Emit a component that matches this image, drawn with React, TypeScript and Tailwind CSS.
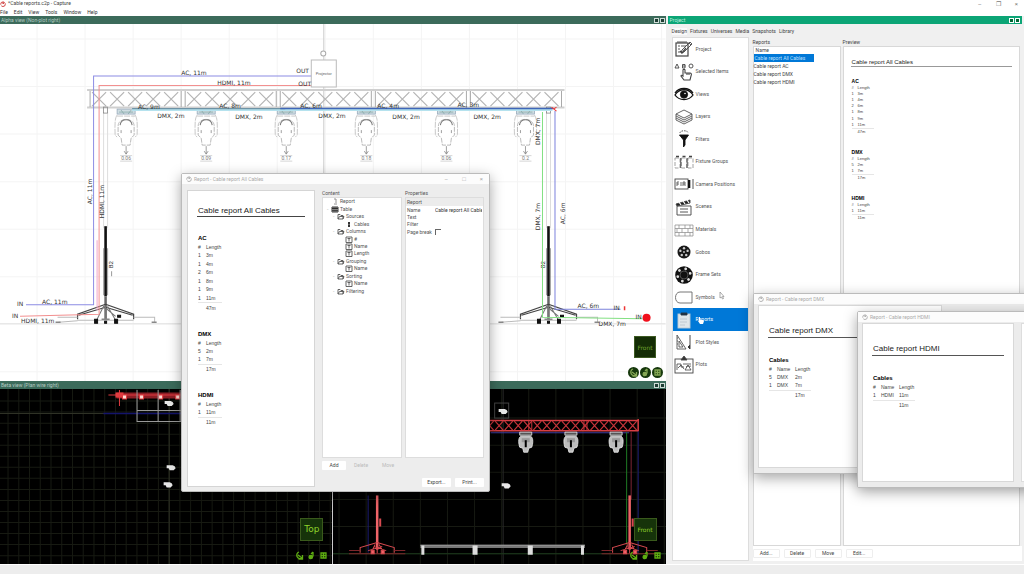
import React from 'react';
import { clsx } from 'clsx';

type Row = string[];

interface Section {
  title: string;
  head: Row;
  rows: Row[];
  total: string;
}

const AC: Section = {
  title: 'AC',
  head: ['#', 'Length'],
  rows: [['1', '3m'], ['1', '4m'], ['2', '6m'], ['1', '8m'], ['1', '9m'], ['1', '11m']],
  total: '47m',
};
const DMX: Section = { title: 'DMX', head: ['#', 'Length'], rows: [['5', '2m'], ['1', '7m']], total: '17m' };
const HDMI: Section = { title: 'HDMI', head: ['#', 'Length'], rows: [['1', '11m']], total: '11m' };

const DMX_ONLY: Section = {
  title: 'Cables',
  head: ['#', 'Name', 'Length'],
  rows: [['5', 'DMX', '2m'], ['1', 'DMX', '7m']],
  total: '17m',
};
const HDMI_ONLY: Section = { title: 'Cables', head: ['#', 'Name', 'Length'], rows: [['1', 'HDMI', '11m']], total: '11m' };

const MENU = ['File', 'Edit', 'View', 'Tools', 'Window', 'Help'];
const TABS = ['Design', 'Fixtures', 'Universes', 'Media', 'Snapshots', 'Library'];
const REPORTS = ['Cable report All Cables', 'Cable report AC', 'Cable report DMX', 'Cable report HDMI'];

/* ---------- report table ---------- */

const ReportSection: React.FC<{ section: Section; small?: boolean }> = ({ section, small }) => (
  <section>
    <h3 className={clsx('font-bold text-black', small ? 'text-[5px] leading-[7px]' : 'text-[6px] leading-[10px]')}>{section.title}</h3>
    <table
      className={clsx(
        'border-collapse text-left text-[#444]',
        small ? 'text-[4px] leading-[6px]' : 'text-[5px] leading-[8px]',
        section.rows.length > 4 && (small ? 'h-[50px]' : 'h-[69px]'),
        section.rows.length === 2 && (small ? 'h-[25px]' : 'h-[34px]'),
        section.rows.length === 1 && (small ? 'h-[19px]' : 'h-[26px]'),
      )}
    >
      <thead>
        <tr>
          {section.head.map((h, i) => (
            <th key={h} className={clsx('p-0 font-normal', i === 0 ? (small ? 'w-[6px]' : 'w-[8px]') : h === 'Name' ? 'w-[18px]' : 'w-[16px]')}>{h}</th>
          ))}
        </tr>
      </thead>
      <tbody>
        {section.rows.map((row, r) => (
          <tr key={r}>
            {row.map((cell, c) => <td key={c} className="p-0">{cell}</td>)}
          </tr>
        ))}
        <tr className="border-t border-[#e6e6e6]">
          <td className="p-0" colSpan={section.head.length - 1} />
          <td className="p-0">{section.total}</td>
        </tr>
      </tbody>
    </table>
  </section>
);

const AllCables: React.FC<{ small?: boolean }> = ({ small }) => (
  <div className={clsx("font-['Liberation_Sans']", small ? 'px-[7px] pt-[11px]' : 'px-[9px] pt-[14px]')}>
    <h2 className={clsx('border-b px-[1px] text-[#222]', small ? 'border-[#999] text-[6px] leading-[8px]' : 'border-[#444] text-[8px] leading-[11px]')}>
      Cable report All Cables
    </h2>
    <div className={clsx('flex flex-col px-[1px]', small ? 'gap-[14px] pt-[11px]' : 'gap-[17px] pt-[16px]')}>
      {[AC, DMX, HDMI].map((s) => <ReportSection key={s.title} section={s} small={small} />)}
    </div>
  </div>
);

/* ---------- icons ---------- */

const Svg: React.FC<{ children: React.ReactNode; className?: string }> = ({ children, className = 'h-[18px] w-[20px]' }) => (
  <svg viewBox="0 0 20 18" className={className} fill="none" stroke="#444" strokeWidth="0.9" aria-hidden="true">{children}</svg>
);

const spokes = [0, 60, 120, 180, 240, 300];

const ICONS: Record<string, React.ReactNode> = {
  Project: (
    <Svg>
      <rect x="2" y="3" width="12" height="13" strokeWidth="1.2" />
      <path d="M3 2h10M4 6h2M4 9h2M4 12h2M7 6h5M7 13l1-3 8-8 2 2-8 8zM15 3l2 2" />
      <path d="M6 11l2 2 4-5" strokeWidth="1.3" />
    </Svg>
  ),
  'Selected Items': (
    <Svg>
      <path d="M1 5l2-4 2 4zM11 1.500H8.500v3.500H11zM8.500 3h3" />
      <circle cx="17" cy="3" r="2" />
      <path d="M9 12V7c0-1 2-1 2 0v3h5c1 0 2 1 1 3l-1 4h-6l-3-4c0-1 1-1 2 0zM13 10v2M15 10v2" strokeWidth="1.1" />
    </Svg>
  ),
  Views: (
    <Svg>
      <path d="M1 10c4-7 14-7 18 0-4 6-14 6-18 0z" strokeWidth="1.3" stroke="#111" />
      <path d="M1 8c4-6 14-6 18 0" strokeWidth="1.3" stroke="#111" />
      <circle cx="10" cy="9.500" r="3.600" fill="#111" stroke="#111" />
      <circle cx="11" cy="8.500" r="0.800" fill="#fff" stroke="none" />
    </Svg>
  ),
  Layers: (
    <Svg>
      <path d="M10 2l8 4-8 4-8-4zM2 6v6l8 4 8-4V6M2 8l8 4 8-4M2 10l8 4 8-4" stroke="#555" />
    </Svg>
  ),
  Filters: (
    <Svg>
      <path d="M6 3c0-3 8-3 8 0" strokeDasharray="1.500 1" />
      <path d="M5.500 5h9l-3.500 5v5l-1.500 2v-7z" fill="#111" stroke="#111" />
    </Svg>
  ),
  'Fixture Groups': (
    <Svg>
      <path d="M1 5h5v10H1zM7.500 5h5v10h-5zM14 5h5v10h-5z" stroke="#999" strokeDasharray="4 1.500" />
      <path d="M2 3.500h3M8.500 3.500h3M15 3.500h3" strokeWidth="1.500" />
      <path d="M6.700 5v10M13.200 5v10" stroke="#444" />
    </Svg>
  ),
  'Camera Positions': (
    <Svg>
      <rect x="1" y="4" width="13" height="10" />
      <path d="M3 11V7h2M3 9h2M7 11V7M9 11V7h2v4M9 9h2M14 7l2-2v8l-2-2" strokeWidth="0.800" />
      <path d="M15 5v8" strokeWidth="2" stroke="#111" />
      <path d="M19 4v10" />
    </Svg>
  ),
  Scenes: (
    <Svg>
      <path d="M3 8h14v9H3zM6 11h8M6 14h8" />
      <path d="M2 6l14-4v3L3 8z" fill="#222" />
      <path d="M5 4l2 3M9 3l2 3M13 2l2 3" stroke="#fff" strokeWidth="1.200" />
    </Svg>
  ),
  Materials: (
    <Svg>
      <path d="M1 4h18v11H1zM1 7.500h18M1 11.500h18M5 4v3.500M11 4v3.500M16 4v3.500M3 7.500v4M8 7.500v4M14 7.500v4M5 11.500V15M11 11.500V15M16 11.500V15" stroke="#888" strokeWidth="0.700" />
    </Svg>
  ),
  Gobos: (
    <Svg>
      <circle cx="10" cy="9" r="6.500" fill="#181818" stroke="none" />
      {[0, 72, 144, 216, 288].map((a) => <circle key={a} cx="10" cy="5.200" r="1.200" fill="#ccc" stroke="none" transform={`rotate(${a} 10 9)`} />)}
      <circle cx="10" cy="9" r="0.900" fill="#ccc" stroke="none" />
    </Svg>
  ),
  'Frame Sets': (
    <Svg>
      <circle cx="10" cy="9" r="8.800" fill="#111" stroke="none" />
      {spokes.map((a) => <circle key={a} cx="10" cy="2.600" r="1.400" fill="#ddd" stroke="none" transform={`rotate(${a + 15} 10 9)`} />)}
      <circle cx="10" cy="9" r="4" stroke="#777" strokeWidth="0.600" />
    </Svg>
  ),
  Symbols: (
    <Svg>
      <path d="M6 4h12v11H6c-6 0-6-11 0-11z" stroke="#666" />
    </Svg>
  ),
  Reports: (
    <Svg>
      <rect x="4" y="3" width="12" height="14" fill="#dfe6ea" stroke="#bccbd5" />
      <path d="M7 2h6v2H7z" fill="#234" stroke="#234" />
      <path d="M6 8h7M6 11h7M6 14h5" stroke="#bcc6cf" />
    </Svg>
  ),
  'Plot Styles': (
    <Svg>
      <path d="M3 2v14h9zM5 8v6h4zM3 5h1M3 8h1M3 11h1" stroke="#555" />
      <path d="M16 2v10M14 14l2-2v4z" stroke="#333" fill="#333" />
    </Svg>
  ),
  Plots: (
    <Svg>
      <rect x="1" y="3" width="18" height="14" />
      <path d="M3 14V8h4v3h3M4 12l3-3 3 4M11 14l3-5 3 5zM9 8h8M12 11c2-2 3 0 5-1" strokeWidth="0.800" />
      <path d="M10 0l3 4H7z" fill="#333" />
    </Svg>
  ),
};

const AppMark: React.FC<{ className?: string }> = ({ className }) => (
  <svg viewBox="0 0 6 6" className={clsx('h-[6px] w-[6px]', className)} fill="none" stroke="currentColor" strokeWidth="0.900" aria-hidden="true">
    <circle cx="3" cy="3.200" r="2.300" strokeDasharray="5 1" />
    <path d="M3 1v2l1.500-2" />
  </svg>
);

const ViewTool: React.FC<{ kind: 'orbit' | 'pan' | 'grid'; dark?: boolean }> = ({ kind, dark }) => {
  const ink = dark ? '#5fae12' : '#86a855';
  return (
    <button aria-label={kind} className={clsx('h-[11px] w-[11px] rounded-full', !dark && 'bg-[#16380c]')}>
      <svg viewBox="0 0 11 11" fill="none" stroke={ink} strokeWidth="1.300">
        {kind === 'orbit' && <path d="M5 2a3 3 0 1 0 2.500 6.500M4 5l4 3M8.500 5v4H4.500" />}
        {kind === 'pan' && <path d="M7 2v4.500M7 2l-2 2" />}
        {kind === 'pan' && <circle cx="4.800" cy="7" r="1.700" fill={ink} />}
        {kind === 'grid' && <path d="M3 3h5v5H3zM3 5.500h5M5.500 3v5" />}
      </svg>
    </button>
  );
};

/* ---------- viewports ---------- */

const ViewControls: React.FC<{ label: string; dark?: boolean }> = ({ label, dark }) => (
  <div className="absolute right-[3px] bottom-[3px] flex w-[35px] flex-col items-center gap-[9px]">
    <button
      className={clsx(
        "flex items-center justify-center border font-['DejaVu_Sans']",
        dark ? 'h-[23px] w-[23px] border-[#3a5a1c] bg-[#16330a] text-[#8fd22a]' : 'h-[22px] w-[22px] border-[#3d5a22] bg-[#142c05] text-[#6fa22e]',
        label === 'Top' ? 'text-[9px]' : 'text-[6px]',
      )}
    >
      {label}
    </button>
    <div className="flex gap-[1px]">
      <ViewTool kind="orbit" dark={dark} />
      <ViewTool kind="pan" dark={dark} />
      <ViewTool kind="grid" dark={dark} />
    </div>
  </div>
);

const ViewHeader: React.FC<{ title: string }> = ({ title }) => (
  <header className="flex h-[8px] shrink-0 items-center justify-between bg-[#3c6b5b] px-[1px] text-[5px] leading-[8px] text-[#b5ccc3]">
    <span>{title}</span>
    <span className="flex gap-[1px]">
      <button aria-label="Maximize view" className="h-[5px] w-[5px] border border-[#cfdcd7] bg-[#1d3d33]" />
      <button aria-label="Close view" className="h-[5px] w-[5px] border border-[#cfdcd7] bg-[#1d3d33]" />
    </span>
  </header>
);

const range = (n: number) => Array.from({ length: n }, (_, i) => i);

const Fixture: React.FC<{ x: number; id: string }> = ({ x, id }) => (
  <g transform={`translate(${x} 109)`} fill="none" stroke="#aaa" strokeWidth="0.800">
    <rect x="-9" y="0" width="18" height="5" fill="#cfdde2" stroke="#9ab" />
    <path d="M-7 3H7M-5 1l3 4M5 1l-3 4" stroke="#8aa" />
    <path d="M-9 6c-3 4-2 14-2 20l2 2M9 6c3 4 2 14 2 20l-2 2M-9 7H9" stroke="#bbb" strokeDasharray="6 1" />
    <path d="M-8 17c0-9 16-9 16 0v9l-3 3-1 7h-8l-1-7-3-3z" fill="#fff" strokeDasharray="5 1" />
    <path d="M-6 16c1-7 11-7 12 0" stroke="#777" strokeWidth="1" />
    <path d="M-5 21v3M5 21v3M0 37v8M-2 42l2 3 2-3" stroke="#888" />
    <text x="0" y="51" textAnchor="middle" fontSize="5" fill="#777" stroke="none">{id}</text>
    <path d="M-6 46.500H6M-6 52H6" stroke="#ccc" />
  </g>
);

const Tower: React.FC<{ x: number; side: 1 | -1 }> = ({ x, side }) => (
  <g transform={`translate(${x} 0)`} fill="none">
    <path d="M-2 112V228M2 112V228" stroke="#ddd" />
    <rect x="-2" y="107" width="4" height="6" stroke="#888" strokeWidth="0.800" />
    <path d="M0 226V296" stroke="#111" strokeWidth="2.600" />
    <path d="M0 296V320" stroke="#666" strokeWidth="2.500" />
    <path d="M-2 248V295M2 248V295" stroke="#666" strokeWidth="0.600" />
    <path d="M0 304L-28 314V319M0 304L28 314V319M0 307L-27 315M0 307L27 315" stroke="#444" strokeWidth="1.200" />
    <path d="M-2 306L-9 320M2 306L10 320M0 306V320M-2 306L10 316" stroke="#777" />
    <path d="M-47 322L-28 320.500M-28 320H28M28 317H49V322M-28 317H-48" stroke="#bbb" />
    <path d="M-50 322h5M46 322h5M-4 319H4" stroke="#888" strokeWidth="1.500" />
    <path d="M-11 319h3v4h-3zM9 319h3v4H9zM12 315h3v2h-3zM-1 321h2v2h-2z" fill="#111" stroke="#111" />
    <text transform={`translate(${side > 0 ? 7 : -3} 268) rotate(-90)`} fontSize="6" fill="#333">B2</text>
    <path d={`M${side * 6} 271v5`} stroke="#999" />
  </g>
);

const label = "font-['DejaVu_Sans'] text-[6px] fill-[#333]";

const PlotView = () => (
  <svg viewBox="0 24 665 357" className="block h-full w-full bg-white" role="img" aria-label="Front plot of the rig">
    <g stroke="#f4f4f4" strokeWidth="1">
      {range(14).map((i) => <path key={i} d={`M${37 + i * 48} 24V381`} />)}
      {range(8).map((i) => <path key={i} d={`M0 ${39 + i * 47.500}H665`} />)}
    </g>
    <path d="M0 323.500H665" stroke="#e2e2e2" />
    <path d="M323.500 24V173" stroke="#ccc" />

    {/* truss */}
    <g fill="none" stroke="#cfcfcf">
      <path d="M87 90H564M87 107.500H564" strokeWidth="2" />
      {range(5).map((i) => (
        <g key={i} transform={`translate(${88 + i * 95} 91)`}>
          <path d="M2 0V16M93 0V16" stroke="#aaa" />
          {range(5).map((k) => <path key={k} d={`M${4 + k * 18} 1L${18 + k * 18} 15M${18 + k * 18} 1L${4 + k * 18} 15`} stroke="#b5b5b5" strokeWidth="1.200" />)}
        </g>
      ))}
    </g>

    {[126, 206, 286, 366, 446, 525].map((x, i) => <Fixture key={x} x={x} id={['0.06', '0.09', '0.17', '0.18', '0.06', '0.2'][i]} />)}
    <Tower x={105.500} side={1} />
    <Tower x={548} side={-1} />

    {/* cables */}
    <g fill="none">
      <path d="M132 110H552" stroke="#b5e2ee" strokeWidth="2" />
      <path d="M132 108.500H285" stroke="#6f93a5" strokeWidth="1.200" />
      <path d="M280 108.500H553" stroke="#3f66b8" strokeWidth="1.500" />
      <path d="M312 76H93.500V304.500H26" stroke="#8c8ce4" />
      <path d="M312 85.500H99V314L20 316" stroke="#f29090" />
      <path d="M97 310V240" stroke="#f3a5c8" />
      <path d="M554.500 111V309H620" stroke="#7c82dc" />
      <path d="M542 112V317L642 318.500" stroke="#83e083" />
      <path d="M551 107l5 4M556 107l-3 2" stroke="#e33" />
    </g>

    <path d="M311 60h25v27h-25z" fill="#fff" stroke="#bbb" />
    <circle cx="323" cy="53.500" r="2.500" fill="#fff" stroke="#aaa" />
    <text x="323.500" y="75" textAnchor="middle" fontSize="4" fill="#666">Projector</text>

    <g className={label}>
      <text x="181" y="75">AC, 11m</text>
      <text x="217" y="85">HDMI, 11m</text>
      <text x="296" y="73">OUT</text>
      <text x="298" y="86">OUT</text>
      <text x="138" y="109">AC, 9m</text>
      <text x="219" y="108">AC, 8m</text>
      <text x="300" y="108">AC, 6m</text>
      <text x="377" y="108">AC, 4m</text>
      <text x="457" y="107">AC, 3m</text>
      <text x="157" y="118">DMX, 2m</text>
      <text x="235" y="119">DMX, 2m</text>
      <text x="318" y="118">DMX, 2m</text>
      <text x="392" y="119">DMX, 2m</text>
      <text x="473" y="119">DMX, 2m</text>
      <text x="17" y="306">IN</text>
      <text x="42" y="304">AC, 11m</text>
      <text x="12" y="318">IN</text>
      <text x="21" y="323">HDMI, 11m</text>
      <text x="577" y="308">AC, 6m</text>
      <text x="613" y="310">IN</text>
      <text x="598" y="326">DMX, 7m</text>
      <text x="635" y="319">IN</text>
      <text transform="translate(92 204) rotate(-90)">AC, 11m</text>
      <text transform="translate(104 218) rotate(-90)">HDMI, 11m</text>
      <text transform="translate(540 145) rotate(-90)">DMX, 7m</text>
      <text transform="translate(540 230) rotate(-90)">DMX, 7m</text>
      <text transform="translate(564 224) rotate(-90)">AC, 6m</text>
    </g>
    <circle cx="646" cy="317.500" r="4" fill="#f0101c" />
    <path d="M624 306v4" stroke="#e33" strokeWidth="1.500" />
  </svg>
);

const DarkGrid: React.FC<{ x: number; step: number; count: number; y: number; ystep: number; rows: number }> = ({ x, step, count, y, ystep, rows }) => (
  <g stroke="#171a12">
    {range(count).map((i) => <path key={i} d={`M${x + i * step} 390V565`} />)}
    {range(rows).map((i) => <path key={i} d={`M0 ${y + i * ystep}H665`} />)}
  </g>
);

const Lamp: React.FC<{ x: number; y: number }> = ({ x, y }) => (
  <path d={`M${x - 4} ${y - 2}l6 0 2 1 1 2-2 2h-4l-1-2-2 0z`} fill="#e8e8e8" />
);

const TopView = () => (
  <svg viewBox="0 390 331 174" preserveAspectRatio="xMinYMid slice" className="block h-full w-full bg-black" role="img" aria-label="Top view of the rig">
    <DarkGrid x={8} step={10.700} count={31} y={402} ystep={11} rows={15} />
    <path d="M168.500 390V565M0 414.500H331" stroke="#2f3226" />
    <path d="M103 414.500H182" stroke="#14146c" strokeWidth="1.500" />
    <path d="M116 396.500H182" stroke="#8d1f26" strokeWidth="6" />
    <path d="M108 396H182M119 391V407" stroke="#e03b40" />
    <path d="M115 396h8" stroke="#e03b40" strokeWidth="5" />
    <path d="M122 396h4v4h-4zM139 396h4v4h-4zM158 396h4v4h-4zM175 396h4v4h-4z" fill="#ffdcd5" stroke="#e03b40" />
    <path d="M136.500 391V422.500H182M157.500 391V422.500M179.500 391V422.500M136.500 411.500H182" fill="none" stroke="#999" />
    <Lamp x={168} y={404} />
    <Lamp x={170} y={468} />
    <Lamp x={167} y={485} />
  </svg>
);

const RedTower: React.FC<{ x: number }> = ({ x }) => (
  <g transform={`translate(${x} 0)`} fill="none" stroke="#d84a50">
    <path d="M0 496V550" strokeWidth="2.500" stroke="#ef6468" />
    <path d="M3 519v8" strokeWidth="2" />
    <path d="M0 543L-17 548V553M0 543L17 548V553M-2 545L-6 553M2 545L6 553M0 545V554M-9 551l14-4M9 551l-12-4" />
    <path d="M-28 551H-17M17 551H28M-28 554H28" stroke="#7e262b" />
    <path d="M-6 551h3v3h-3zM4 551h3v3H4z" fill="#ef6468" />
  </g>
);

const FrontView = () => (
  <svg viewBox="332 390 333 174" preserveAspectRatio="xMidYMid slice" className="block h-full w-full bg-black" role="img" aria-label="Front view of the rig">
    <DarkGrid x={339} step={27} count={13} y={419} ystep={27} rows={6} />
    <path d="M502.500 390V564" stroke="#2a2a2a" />
    <path d="M332 554H665" stroke="#1b3a1b" />
    <path d="M368 496V553M637 432V553" stroke="#1d1d72" />
    <path d="M490 433.500H628" stroke="#3c3c9c" />
    <path d="M625.500 433V545" stroke="#1f7a25" />
    <path d="M630 433V500" stroke="#7c2634" />
    <g stroke="#c5343a" fill="none">
      <path d="M480 421.500H637M480 431.500H637M637 420V432" strokeWidth="1.500" stroke="#d83f45" />
      {range(16).map((i) => <path key={i} d={`M${485 + i * 9.500} 422l8 9M${493 + i * 9.500} 422l-8 9`} strokeWidth="1.200" />)}
      <path d="M528 422v9M531 422v9M583 422v9M586 422v9" />
    </g>
    {[525, 570, 615].map((x) => (
      <g key={x} transform={`translate(${x} 433)`} fill="#bdbdbd" stroke="#eee" strokeWidth="0.800">
        <path d="M-6 0H6V3H-6z" fill="#555" />
        <path d="M-5 4C-8 6-7 12-6 15l3 1 1 4h4l1-4 3-1c1-3 2-9-1-11z" />
        <path d="M-4 6h8v4h-8z" fill="#999" stroke="none" />
        <path d="M-1 8h2v7h-2z" fill="#000" stroke="none" />
      </g>
    ))}
    <RedTower x={377} />
    <RedTower x={628.500} />
    <rect x="494" y="404" width="14" height="15" fill="none" stroke="#444" />
    <Lamp x={502} y={412} />
    <Lamp x={505} y={486} />
    <path d="M420 547H584" stroke="#777" strokeWidth="3" />
    <path d="M420 545.500H584" stroke="#aaa" strokeWidth="0.800" />
    <path d="M421 546h3v9h-3zM472 546h5v9h-5zM527 546h5v9h-5zM580 546h3v9h-3z" fill="#ddd" />
  </svg>
);

/* ---------- floating windows ---------- */

const WindowFrame: React.FC<{ title: string; controls?: boolean; className: string; children: React.ReactNode }> = ({ title, controls, className, children }) => (
  <div role="dialog" aria-label={title} className={clsx('absolute flex flex-col rounded-[2px] border border-[#bbb] bg-[#ededed] shadow-[0_4px_14px_rgba(0,0,0,0.35)]', className)}>
    <header className="flex h-[10px] shrink-0 items-center gap-[2px] bg-[#fcfcfc] px-[4px] text-[5px] leading-[10px] text-[#aaa]">
      <AppMark />
      <span className="flex-1">{title}</span>
      {controls && (
        <span className="flex gap-[14px] pr-[2px] text-[6px]">
          <button aria-label="Minimize">–</button>
          <button aria-label="Maximize">□</button>
          <button aria-label="Close">×</button>
        </span>
      )}
    </header>
    {children}
  </div>
);

const TREE: { name: string; depth: number; icon: 'page' | 'table' | 'folder' | 'plug' | 'field' }[] = [
  { name: 'Report', depth: 0, icon: 'page' },
  { name: 'Table', depth: 0, icon: 'table' },
  { name: 'Sources', depth: 1, icon: 'folder' },
  { name: 'Cables', depth: 2, icon: 'plug' },
  { name: 'Columns', depth: 1, icon: 'folder' },
  { name: '#', depth: 2, icon: 'field' },
  { name: 'Name', depth: 2, icon: 'field' },
  { name: 'Length', depth: 2, icon: 'field' },
  { name: 'Grouping', depth: 1, icon: 'folder' },
  { name: 'Name', depth: 2, icon: 'field' },
  { name: 'Sorting', depth: 1, icon: 'folder' },
  { name: 'Name', depth: 2, icon: 'field' },
  { name: 'Filtering', depth: 1, icon: 'folder' },
];

const TreeIcon: React.FC<{ kind: string }> = ({ kind }) => (
  <svg viewBox="0 0 8 7" className="h-[7px] w-[8px] shrink-0" fill="none" stroke="#555" strokeWidth="0.900" aria-hidden="true">
    {kind === 'page' && <path d="M3 1h2v4M3 6h3" stroke="#888" />}
    {kind === 'table' && <path d="M1 1h6v5H1zM1 2.500h6M1 4.300h6M3 1v5M5 1v5" stroke="#222" />}
    {kind === 'folder' && <path d="M1 6V1.500h2l1 1h2V6zM1 6l1.500-2.500H7L6 6" />}
    {kind === 'plug' && <path d="M4 1v5M3 2h2M3 5h2" stroke="#222" strokeWidth="1.300" />}
    {kind === 'field' && <path d="M1 1h6v5.500H1zM2.500 2.500h3M4 2.500v3" />}
  </svg>
);

const pushButton = 'h-[9px] rounded-[1px] bg-white px-[4px] text-[5px] leading-[9px] text-[#444]';

const AllCablesWindow = () => (
  <WindowFrame title="Report - Cable report All Cables" controls className="top-[173px] left-[181px] h-[319px] w-[309px]">
    <div className="flex min-h-0 flex-1 gap-[7px] px-[5px] pt-[6px] pb-[4px]">
      <div className="w-[128px] shrink-0 border border-[#d5d5d5] bg-white">
        <AllCables />
      </div>
      <div className="flex min-w-0 flex-1 flex-col text-[5px] leading-[7px] text-[#555]">
        <div className="flex min-h-0 flex-1 gap-[3px]">
          <div className="flex w-[80px] shrink-0 flex-col">
            <h3>Content</h3>
            <div className="flex-1 border border-[#ddd] bg-white">
              <ul className="grid h-[97px] grid-rows-[repeat(13,1fr)]">
                {TREE.map((n, i) => (
                  <li
                    key={i}
                    className={clsx('flex items-center gap-[1px]', n.depth === 0 && 'pl-[4px]', n.depth === 1 && 'pl-[10px]', n.depth === 2 && 'pl-[18px]')}
                  >
                    <span className="w-[3px] text-[#aaa]">{n.icon === 'table' || n.icon === 'folder' ? '-' : ''}</span>
                    <TreeIcon kind={n.icon} />
                    {n.name}
                  </li>
                ))}
              </ul>
            </div>
          </div>
          <div className="flex min-w-0 flex-1 flex-col">
            <h3>Properties</h3>
            <div className="flex-1 border border-[#ddd] bg-white">
              <h4 className="bg-[#ececec] px-[1px] leading-[8px]">Report</h4>
              <label className="flex h-[8px] items-center px-[1px]">
                <span className="w-[28px] shrink-0">Name</span>
                <input className="min-w-0 flex-1 bg-transparent text-[#333]" defaultValue="Cable report All Cables" />
              </label>
              <label className="flex h-[7px] items-center px-[1px]">
                <span className="w-[28px] shrink-0">Text</span>
                <input className="min-w-0 flex-1 bg-transparent" />
              </label>
              <label className="flex h-[7px] items-center px-[1px]">
                <span className="w-[28px] shrink-0">Filter</span>
                <input className="min-w-0 flex-1 bg-transparent" />
              </label>
              <label className="flex h-[8px] items-center px-[1px]">
                <span className="w-[28px] shrink-0">Page break</span>
                <input type="checkbox" className="h-[6px] w-[6px] appearance-none border-t border-l border-[#666]" />
              </label>
            </div>
          </div>
        </div>
        <div className="flex gap-[3px] pt-[3px]">
          <button className={clsx(pushButton, 'w-[24px]')}>Add</button>
          <button disabled className="h-[9px] w-[24px] text-[#bbb]">Delete</button>
          <button disabled className="h-[9px] w-[24px] text-[#bbb]">Move</button>
        </div>
        <div className="flex justify-end gap-[4px] pt-[8px]">
          <button className={clsx(pushButton, 'w-[29px]')}>Export...</button>
          <button className={clsx(pushButton, 'w-[29px]')}>Print...</button>
        </div>
      </div>
    </div>
  </WindowFrame>
);

const SingleReport: React.FC<{ title: string; section: Section; className: string }> = ({ title, section, className }) => (
  <div className={clsx("shrink-0 border border-[#d8d8d8] bg-white px-[9px] pt-[19px] font-['Liberation_Sans']", className)}>
    <h2 className="border-b border-[#555] px-[1px] text-[8px] leading-[12px] text-[#222]">{title}</h2>
    <div className="px-[1px] pt-[17px]">
      <ReportSection section={section} />
    </div>
  </div>
);

/* ---------- project panel ---------- */

const ProjectPanel = () => (
  <aside className="flex min-w-0 flex-1 flex-col border-l-2 border-[#f0f0f0] bg-[#f0f0f0] pr-[2px]">
    <header className="flex h-[8px] shrink-0 items-center justify-between bg-[#0ca576] px-[2px] text-[5px] leading-[8px] text-[#bff0df]">
      <span>Project</span>
      <span className="flex gap-[1px]">
        <button aria-label="Pin panel" className="h-[5px] w-[5px] border border-white bg-[#063]" />
        <button aria-label="Close panel" className="h-[5px] w-[5px] border border-white bg-[#063]" />
      </span>
    </header>
    <nav className="flex h-[13px] shrink-0 items-end gap-[3px] px-[4px] pb-[2px] text-[5px] leading-[7px] text-[#444]">
      {TABS.map((t) => <button key={t} className={clsx(t === 'Design' && 'bg-[#fafafa]')}>{t}</button>)}
    </nav>
    <div className="mb-[3px] flex min-h-0 flex-1 gap-[4px] pl-[4px]">
      <div className="w-[77px] shrink-0 border border-[#ddd] bg-white">
        <ul className="grid h-[338px] grid-rows-[repeat(15,1fr)] text-[5px] leading-[7px] text-[#555]">
          {Object.entries(ICONS).map(([name, icon]) => (
            <li key={name} className={clsx('relative', name === 'Reports' && 'bg-[#0078d7] text-white')}>
              <button className="flex h-full w-full items-center gap-[2px] pl-[1px] text-left">
                {icon}
                {name}
              </button>
              {name === 'Symbols' && (
                <svg viewBox="0 0 6 9" className="absolute top-[5px] left-[46px] h-[9px] w-[6px]" fill="#fff" stroke="#888" strokeWidth="0.700" aria-hidden="true">
                  <path d="M1 1v6l1.500-1 1 2 1-.5-1-2H5z" />
                </svg>
              )}
              {name === 'Reports' && (
                <svg viewBox="0 0 6 8" className="absolute top-[9px] left-[25px] h-[8px] w-[6px]" fill="#fff" aria-hidden="true">
                  <path d="M1 0h1v3h3l1 1-1 3H2L0 4h1z" />
                </svg>
              )}
            </li>
          ))}
        </ul>
      </div>
      <div className="flex min-w-0 flex-1 flex-col bg-white">
        <div className="flex min-h-0 flex-1 gap-[2px] bg-[#f0f0f0] pt-[2px] pr-[2px] text-[5px] leading-[7px] text-[#444]">
          <section className="flex w-[88px] shrink-0 flex-col">
            <h3>Reports</h3>
            <div className="flex-1 border border-[#d8d8d8] bg-white">
              <h4 className="px-[2px] leading-[7px]">Name</h4>
              <ul>
                {REPORTS.map((r, i) => (
                  <li key={r} className="h-[8px]">
                    <button className={clsx('block h-[8px] text-left leading-[8px]', i === 0 && 'w-[60px] bg-[#0078d7] pl-[1px] text-[#bfe0ff]')}>{r}</button>
                  </li>
                ))}
              </ul>
            </div>
          </section>
          <section className="flex min-w-0 flex-1 flex-col">
            <h3>Preview</h3>
            <div className="flex-1 border border-[#d8d8d8] bg-white">
              <AllCables small />
            </div>
          </section>
        </div>
        <div className="flex h-[15px] shrink-0 items-center gap-[4px] text-[5px] text-[#444]">
          {['Add...', 'Delete', 'Move', 'Edit...'].map((b) => (
            <button key={b} className="h-[9px] w-[27px] rounded-[1px] border border-[#eee] bg-white leading-[7px]">{b}</button>
          ))}
        </div>
      </div>
    </div>
  </aside>
);

export default function App() {
  return (
    <div className="relative flex h-screen flex-col overflow-hidden bg-[#efefef] font-[Roboto,'Open_Sans',sans-serif]">
      <div className="flex h-[7px] shrink-0 items-center gap-[2px] bg-white text-[5px] leading-[7px] text-[#444]">
        <AppMark className="text-[#c33]" />
        <h1 className="flex-1">*Cable reports.c2p - Capture</h1>
        <span className="flex gap-[14px] pr-[6px] text-[6px] text-[#777]">
          <button aria-label="Minimize">–</button>
          <button aria-label="Restore">❐</button>
          <button aria-label="Close">×</button>
        </span>
      </div>
      <nav className="flex h-[9px] shrink-0 items-center gap-[6px] bg-white text-[5px] leading-[8px] text-[#333]">
        {MENU.map((m) => <button key={m}>{m}</button>)}
      </nav>

      <main className="flex min-h-0 flex-1">
        <div className="flex w-[65%] shrink-0 flex-col">
          <section className="flex min-h-0 flex-[2] flex-col">
            <ViewHeader title="Alpha view  (Non-plot right)" />
            <div className="relative min-h-0 flex-1">
              <PlotView />
              <ViewControls label="Front" />
            </div>
          </section>
          <section className="flex min-h-0 flex-1 flex-col">
            <ViewHeader title="Beta view  (Plan wire right)" />
            <div className="flex min-h-0 flex-1 gap-[1px] bg-[#ccc]">
              <div className="relative min-w-0 flex-1">
                <TopView />
                <ViewControls label="Top" dark />
              </div>
              <div className="relative min-w-0 flex-1">
                <FrontView />
                <ViewControls label="Front" dark />
              </div>
            </div>
          </section>
        </div>
        <ProjectPanel />
      </main>
      <footer className="h-[10px] shrink-0 border-t border-white bg-[#ededed]" />

      <AllCablesWindow />
      <WindowFrame title="Report - Cable report DMX" className="top-[293px] -right-[40px] h-[181px] w-[311px]">
        <div className="flex min-h-0 flex-1 bg-[#ececec] pt-[1px] pb-[5px] pl-[4px]">
          <SingleReport title="Cable report DMX" section={DMX_ONLY} className="w-[184px]" />
        </div>
      </WindowFrame>
      <WindowFrame title="Report - Cable report HDMI" className="top-[311px] -right-[142px] h-[177px] w-[309px]">
        <div className="flex min-h-0 flex-1 gap-[7px] bg-[#ececec] pt-[1px] pb-[5px] pl-[4px]">
          <SingleReport title="Cable report HDMI" section={HDMI_ONLY} className="w-[152px]" />
          <div className="flex-1 border border-[#ddd] bg-white" />
        </div>
      </WindowFrame>
    </div>
  );
}
